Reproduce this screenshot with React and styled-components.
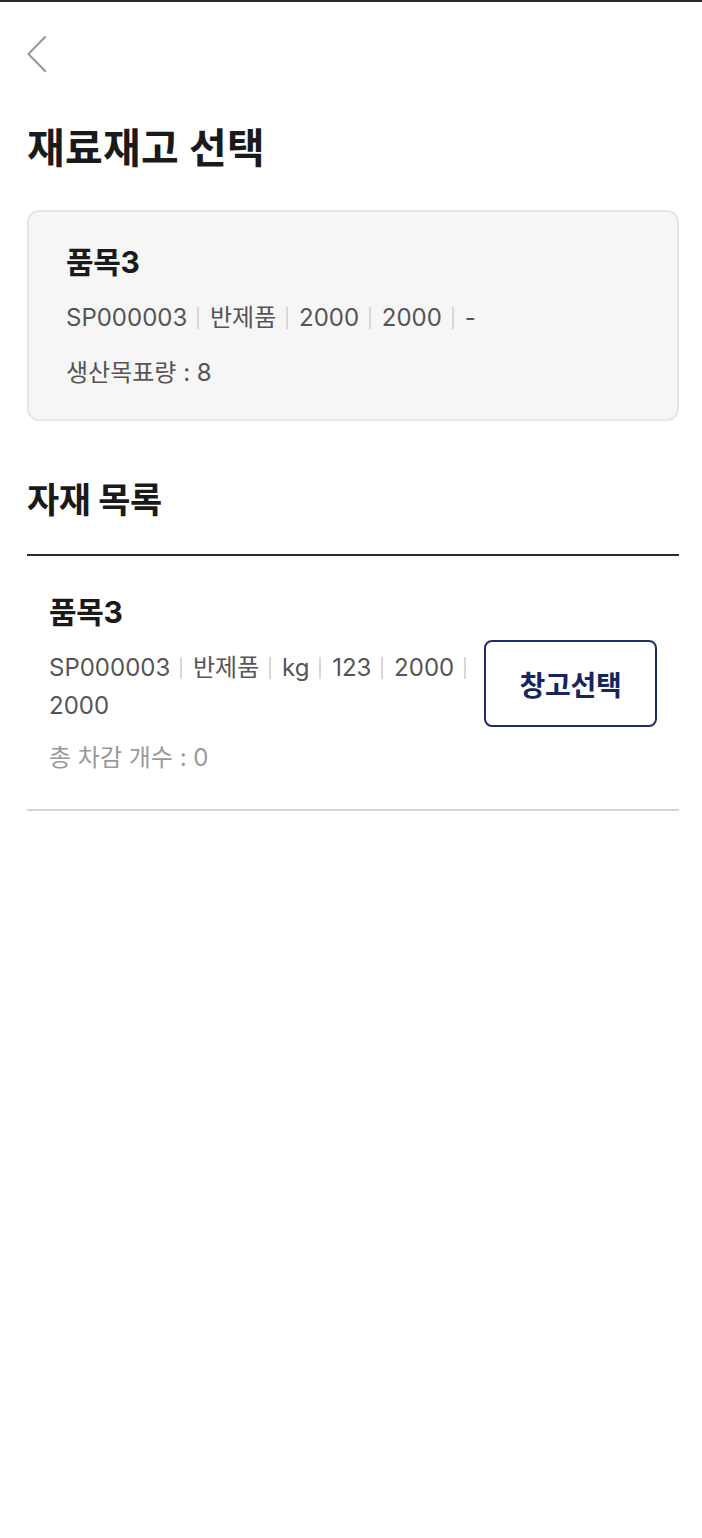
import React from "react";
import styled, { createGlobalStyle } from "styled-components";

const Global = createGlobalStyle`
  html, body { margin: 0; padding: 0; background: #fff; }
  body { font-family: "Inter", "Noto Sans CJK KR", sans-serif; color: #1a1a1a; }
  * { box-sizing: border-box; }
`;

const TopLine = styled.div`
  height: 2px;
  background: #2a2a2a;
`;

const Page = styled.div`
  padding: 0 23px 40px 27px;
`;

const Header = styled.header`
  height: 104px;
  display: flex;
  align-items: flex-start;
  padding-top: 33px;
`;

const BackButton = styled.button`
  border: 0;
  background: none;
  padding: 0;
  width: 20px;
  height: 38px;
  cursor: pointer;
  display: flex;
`;

const Title = styled.h1`
  margin: 18px 0 38px;
  font-size: 41px;
  line-height: 48px;
  font-weight: 700;
  letter-spacing: 0.3px;
  color: #1a1a1a;
`;

const Card = styled.section`
  background: #f6f6f6;
  border: 2px solid #e6e6e6;
  border-radius: 12px;
  padding: 31px 37px 30px;
`;

const ItemName = styled.div`
  font-size: 30px;
  line-height: 38px;
  font-weight: 700;
  color: #1a1a1a;
  letter-spacing: -0.3px;
`;

const Meta = styled.div`
  font-size: 24px;
  line-height: 38px;
  color: #555;
  margin-top: ${(p) => p.$mt || 0}px;
`;

const Unit = styled.span`
  white-space: nowrap;
`;

const Sep = styled.span`
  display: inline-block;
  width: 2px;
  height: 22px;
  background: #d8d8d8;
  margin: 0 4px 0 10px;
  vertical-align: -3px;
`;

const Sub = styled.div`
  font-size: 24px;
  line-height: 32px;
  color: ${(p) => p.$color || "#555"};
  margin-top: ${(p) => p.$mt || 0}px;
`;

const SectionTitle = styled.h2`
  margin: 57px 0 0;
  font-size: 35px;
  line-height: 44px;
  font-weight: 700;
  letter-spacing: -0.5px;
  color: #1a1a1a;
`;

const List = styled.div`
  margin-top: 32px;
  border-top: 2px solid #2a2a2a;
`;

const Row = styled.div`
  display: flex;
  align-items: center;
  gap: 12px;
  padding: 37px 22px 35px;
  border-bottom: 2px solid #d4d4d4;
`;

const RowBody = styled.div`
  flex: 1;
  min-width: 0;
`;

const PickButton = styled.button`
  flex: 0 0 auto;
  width: 173px;
  height: 87px;
  border: 2px solid #1f2d6b;
  border-radius: 8px;
  background: #fff;
  color: #16245f;
  font-family: "Inter", "Noto Sans CJK KR", sans-serif;
  font-size: 28px;
  font-weight: 700;
  letter-spacing: -0.3px;
  cursor: pointer;
`;

function MetaLine({ values, mt }) {
  return (
    <Meta $mt={mt}>
      {values.map((v, i) => (
        <React.Fragment key={i}>
          <Unit>
            {v}
            {i < values.length - 1 && <Sep />}
          </Unit>
          {i < values.length - 1 && " "}
        </React.Fragment>
      ))}
    </Meta>
  );
}

export default function App() {
  return (
    <>
      <Global />
      <TopLine />
      <Page>
        <Header>
          <BackButton aria-label="뒤로">
            <svg width="20" height="38" viewBox="0 0 20 38" fill="none">
              <polyline
                points="18,2 1.5,19 18,36"
                stroke="#9a9a9a"
                strokeWidth="2.2"
                strokeLinecap="round"
                strokeLinejoin="round"
              />
            </svg>
          </BackButton>
        </Header>
        <Title>재료재고 선택</Title>
        <Card>
          <ItemName>품목3</ItemName>
          <MetaLine values={["SP000003", "반제품", "2000", "2000", "-"]} mt={18} />
          <Sub $mt={20}>생산목표량 : 8</Sub>
        </Card>
        <SectionTitle>자재 목록</SectionTitle>
        <List>
          <Row>
            <RowBody>
              <ItemName>품목3</ItemName>
              <MetaLine values={["SP000003", "반제품", "kg", "123", "2000", "2000"]} mt={18} />
              <Sub $color="#999" $mt={17}>총 차감 개수 : 0</Sub>
            </RowBody>
            <PickButton>창고선택</PickButton>
          </Row>
        </List>
      </Page>
    </>
  );
}
